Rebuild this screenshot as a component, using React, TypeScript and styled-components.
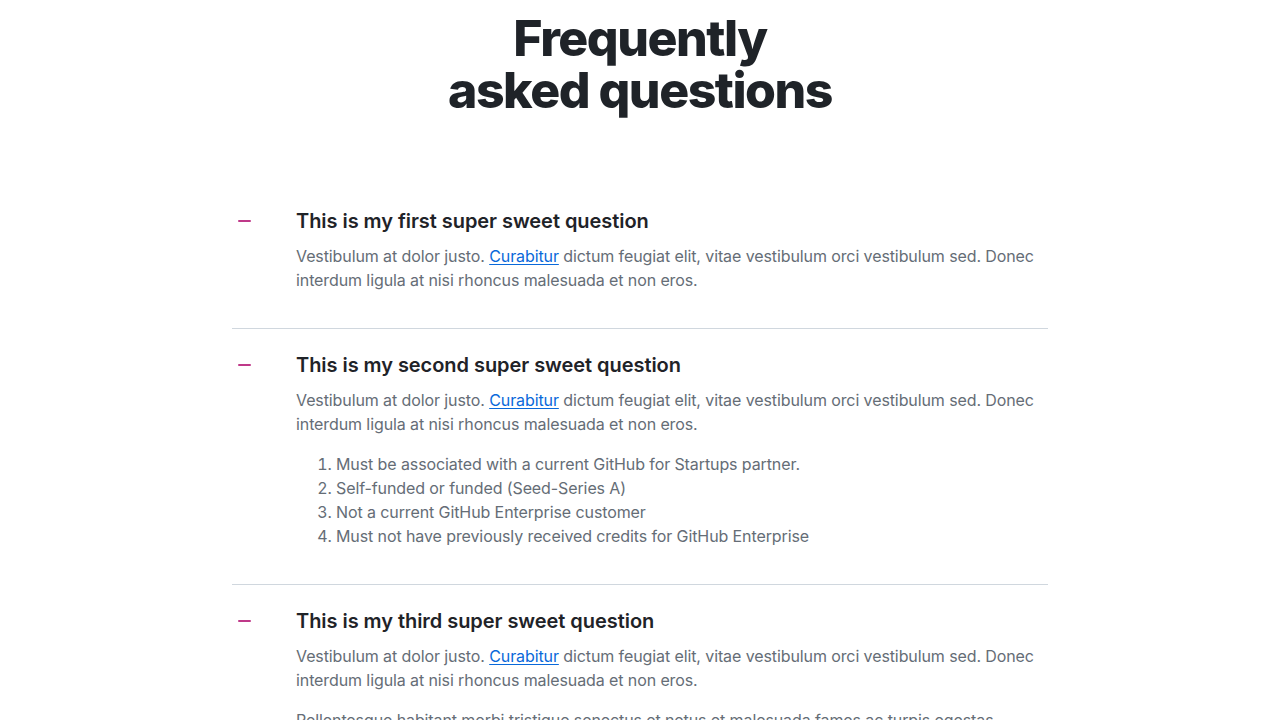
import React from "react";
import styled, { createGlobalStyle } from "styled-components";

const Global = createGlobalStyle`
  html, body { margin: 0; padding: 0; background: #ffffff; }
  body { font-family: Inter, "Noto Sans", sans-serif; -webkit-font-smoothing: antialiased; }
  * { box-sizing: border-box; }
`;

const Page = styled.main`
  width: 816px;
  margin: 0 auto;
  padding-top: 12px;
`;

const Title = styled.h1`
  margin: 0 0 69px;
  text-align: center;
  font-size: 50px;
  line-height: 52px;
  font-weight: 800;
  letter-spacing: -1.5px;
  color: #1f2328;
`;

const List = styled.div`
  display: flex;
  flex-direction: column;
`;

const Item = styled.section<{ $last?: boolean }>`
  display: grid;
  grid-template-columns: 64px 1fr;
  padding: 22px 0 36px;
  border-bottom: ${(p) => (p.$last ? "none" : "1px solid #d0d7de")};
`;

const IconCell = styled.div`
  height: 28px;
  display: flex;
  align-items: center;
  padding-left: 6px;
`;

const Minus = styled.span`
  display: block;
  width: 13px;
  height: 2px;
  background: #bf3989;
  border-radius: 1px;
`;

const Body = styled.div`
  display: flex;
  flex-direction: column;
`;

const Question = styled.h3`
  margin: 0 0 9px;
  font-size: 20px;
  line-height: 28px;
  font-weight: 600;
  letter-spacing: -0.05px;
  color: #1f2328;
`;

const Para = styled.p`
  margin: 0;
  font-size: 16px;
  line-height: 24px;
  color: #656d76;
  letter-spacing: -0.1px;
  & + & { margin-top: 16px; }
`;

const Link = styled.a`
  color: #0969da;
  text-decoration: underline;
  text-underline-offset: 2px;
`;

const Ordered = styled.ol`
  margin: 16px 0 0;
  padding-left: 40px;
  font-size: 16px;
  line-height: 24px;
  color: #656d76;
  letter-spacing: -0.1px;
`;

const Lead = () => (
  <Para>
    Vestibulum at dolor justo. <Link href="#">Curabitur</Link> dictum feugiat elit, vitae vestibulum orci
    vestibulum sed. Donec interdum ligula at nisi rhoncus malesuada et non eros.
  </Para>
);

export default function App() {
  return (
    <>
      <Global />
      <Page>
        <Title>
          Frequently
          <br />
          asked questions
        </Title>
        <List>
          <Item>
            <IconCell><Minus /></IconCell>
            <Body>
              <Question>This is my first super sweet question</Question>
              <Lead />
            </Body>
          </Item>
          <Item>
            <IconCell><Minus /></IconCell>
            <Body>
              <Question>This is my second super sweet question</Question>
              <Lead />
              <Ordered>
                <li>Must be associated with a current GitHub for Startups partner.</li>
                <li>Self-funded or funded (Seed-Series A)</li>
                <li>Not a current GitHub Enterprise customer</li>
                <li>Must not have previously received credits for GitHub Enterprise</li>
              </Ordered>
            </Body>
          </Item>
          <Item $last>
            <IconCell><Minus /></IconCell>
            <Body>
              <Question>This is my third super sweet question</Question>
              <Lead />
              <Para>
                Pellentesque habitant morbi tristique senectus et netus et malesuada fames ac turpis egestas.
              </Para>
            </Body>
          </Item>
        </List>
      </Page>
    </>
  );
}
